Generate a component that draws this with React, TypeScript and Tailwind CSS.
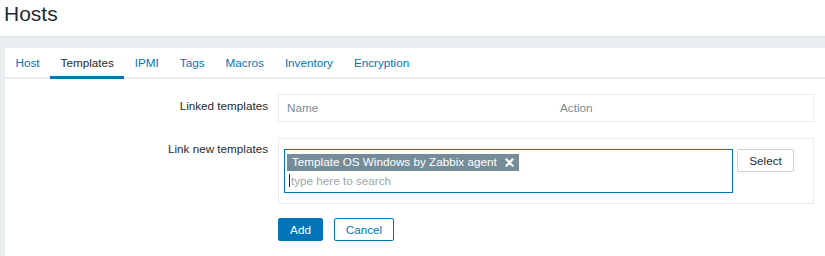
const TABS = ['Host', 'Templates', 'IPMI', 'Tags', 'Macros', 'Inventory', 'Encryption'];

function CloseIcon() {
  return (
    <svg width="9" height="9" viewBox="0 0 10 10" className="shrink-0">
      <path d="M1.5 1.5 L8.5 8.5 M8.5 1.5 L1.5 8.5" stroke="#ffffff" strokeWidth="2.4" strokeLinecap="round" />
    </svg>
  );
}

export default function App() {
  return (
    <div className="w-[825px] h-[256px] overflow-hidden bg-white text-[11.7px] text-[#1f2c33] font-['Liberation_Sans',Arial,sans-serif] flex flex-col">
      {/* Page title */}
      <div className="h-[36px] pl-[4px] pt-[2px]">
        <h1 className="text-[21px] leading-[24px] font-normal">Hosts</h1>
      </div>

      {/* Body */}
      <div className="flex-1 bg-[#ebeef0] border-t border-[#dfe4e7] pt-[11px] pl-[5px] flex flex-col">
        <div className="flex-1 bg-white">
          {/* Tabs */}
          <div className="flex border-b-2 border-[#ebeef0]">
            {TABS.map((tab) => {
              const active = tab === 'Templates';
              return (
                <div
                  key={tab}
                  className={`px-[10.5px] pt-[8px] pb-[6px] -mb-[2px] border-b-[3px] leading-[14px] ${
                    active ? 'border-[#0275b8] text-[#1f2c33]' : 'border-transparent text-[#0275b8]'
                  }`}
                >
                  {tab}
                </div>
              );
            })}
          </div>

          {/* Form */}
          <div className="grid grid-cols-[263px_536px] gap-x-[10px] pt-[15px]">
            <div className="text-right pt-[5px] leading-[14px]">Linked templates</div>
            <div className="h-[28px] border border-[#ebeef0] flex items-center text-[#768d99] leading-[14px]">
              <div className="w-[281px] pl-[8px]">Name</div>
              <div>Action</div>
            </div>

            <div className="text-right pt-[4px] leading-[14px] mt-[16px]">Link new templates</div>
            <div className="mt-[16px] border border-[#ebeef0] pt-[10px] pb-[10px] pl-[5px] flex items-start gap-[4px]">
              <div className="w-[449px] h-[44px] border border-[#0275b8] pt-[3px] pl-[2px]">
                <div className="inline-flex items-center gap-[8px] h-[17px] bg-[#768d99] text-white pl-[5px] pr-[5px] leading-[14px]">
                  <span>Template OS Windows by Zabbix agent</span>
                  <CloseIcon />
                </div>
                <div className="flex items-center mt-[3px] pl-[2px] h-[14px] leading-[14px]">
                  <span className="w-px h-[13px] bg-[#1f2c33] mr-[1px]" />
                  <span className="text-[#9aa7ae]">type here to search</span>
                </div>
              </div>
              <button className="w-[57px] h-[23px] border border-[#cfcfcf] rounded-[2px] bg-white text-[#1f2c33] leading-[14px]">
                Select
              </button>
            </div>

            <div />
            <div className="flex gap-[11px] mt-[14px]">
              <button className="w-[45px] h-[23px] rounded-[2px] bg-[#0275b8] border border-[#0275b8] text-white leading-[14px]">
                Add
              </button>
              <button className="w-[60px] h-[23px] rounded-[2px] bg-white border border-[#0275b8] text-[#0275b8] leading-[14px]">
                Cancel
              </button>
            </div>
          </div>
        </div>
      </div>
    </div>
  );
}
